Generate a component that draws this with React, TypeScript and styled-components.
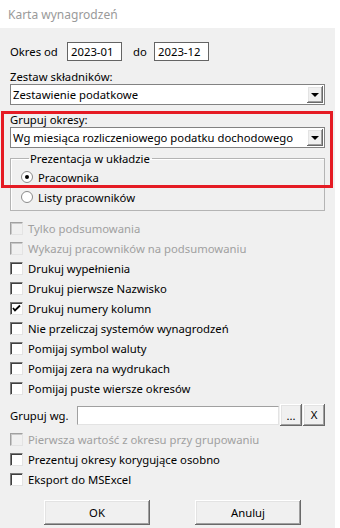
import React, { useState } from 'react';
import styled, { createGlobalStyle, css } from 'styled-components';

const GlobalStyle = createGlobalStyle`
    html, body {
        margin: 0;
        padding: 0;
        background: #ffffff;
    }
    body {
        font-family: 'Noto Sans', 'Open Sans', sans-serif;
        font-size: 11.3px;
        color: #000000;
    }
`;

const raised = css`
    background: #f0f0f0;
    box-shadow: inset -1px -1px #696969, inset 1px 1px #ffffff, inset -2px -2px #a0a0a0, inset 2px 2px #e3e3e3;
`;

const Window = styled.div`
    width: 340px;
    height: 528px;
    display: flex;
    flex-direction: column;
    background: #ffffff;
    overflow: hidden;
`;

const TitleBar = styled.div`
    height: 28px;
    flex: 0 0 28px;
    display: flex;
    align-items: center;
    padding-left: 8px;
    color: #9a9a9a;
    font-size: 12px;
`;

const Body = styled.div`
    position: relative;
    width: 335px;
    flex: 1;
    background: #f0f0f0;
    padding-left: 10px;
    box-sizing: border-box;
    display: flex;
    flex-direction: column;
`;

const PeriodRow = styled.div`
    margin-top: 13px;
    height: 20px;
    display: flex;
    align-items: center;
`;

const InlineLabel = styled.span<{ $width?: number; $left?: number }>`
    width: ${(p) => (p.$width ? `${p.$width}px` : 'auto')};
    margin-left: ${(p) => p.$left ?? 0}px;
    flex: 0 0 auto;
    white-space: nowrap;
`;

const TextBox = styled.div<{ $width: number }>`
    width: ${(p) => p.$width}px;
    height: 19px;
    box-sizing: border-box;
    border: 1px solid #646464;
    background: #ffffff;
    padding-left: 3px;
    line-height: 17px;
    white-space: nowrap;
`;

const FieldLabel = styled.div<{ $top: number }>`
    margin-top: ${(p) => p.$top}px;
    height: 15px;
    line-height: 15px;
    white-space: nowrap;
`;

const Combo = styled.div`
    width: 315px;
    height: 21px;
    box-sizing: border-box;
    border: 1px solid #828282;
    background: #ffffff;
    display: flex;
    align-items: center;
    justify-content: space-between;
    padding: 0 1px 0 2px;
`;

const ComboText = styled.span`
    white-space: nowrap;
    overflow: hidden;
`;

const DropButton = styled.div`
    ${raised};
    width: 16px;
    height: 17px;
    flex: 0 0 16px;
    display: flex;
    align-items: center;
    justify-content: center;
`;

const Triangle = styled.span`
    width: 0;
    height: 0;
    border-left: 4px solid transparent;
    border-right: 4px solid transparent;
    border-top: 4px solid #000000;
    margin-top: 1px;
`;

const GroupBox = styled.fieldset`
    margin: 3px 0 0 0;
    width: 315px;
    box-sizing: border-box;
    border: 1px solid #b4b4b4;
    box-shadow: inset 1px 1px #ffffff;
    padding: 1px 0 3px 10px;
    min-width: 0;

    legend {
        margin-left: 8px;
        padding: 0 2px 0 1px;
        height: 15px;
        line-height: 15px;
    }
`;

const OptionRow = styled.label<{ $disabled?: boolean }>`
    height: 20px;
    display: flex;
    align-items: center;
    white-space: nowrap;
    color: ${(p) => (p.$disabled ? '#a0a0a0' : '#000000')};
`;

const RadioCircle = styled.span<{ $checked: boolean }>`
    width: 12px;
    height: 12px;
    box-sizing: border-box;
    border-radius: 50%;
    border: 1px solid #8a8a8a;
    background: #ffffff;
    margin-right: 5px;
    display: flex;
    align-items: center;
    justify-content: center;

    &::after {
        content: '';
        width: 4px;
        height: 4px;
        border-radius: 50%;
        background: ${(p) => (p.$checked ? '#000000' : 'transparent')};
    }
`;

const CheckSquare = styled.span<{ $disabled?: boolean }>`
    width: 13px;
    height: 13px;
    box-sizing: border-box;
    flex: 0 0 13px;
    margin-right: 5px;
    background: ${(p) => (p.$disabled ? '#f0f0f0' : '#ffffff')};
    border-top: 1px solid ${(p) => (p.$disabled ? '#a0a0a0' : '#7a7a7a')};
    border-left: 1px solid ${(p) => (p.$disabled ? '#a0a0a0' : '#7a7a7a')};
    border-right: 1px solid #e3e3e3;
    border-bottom: 1px solid #e3e3e3;
    box-shadow: inset 1px 1px ${(p) => (p.$disabled ? '#c8c8c8' : '#404040')};
    display: flex;
    align-items: center;
    justify-content: center;
`;

const CheckList = styled.div<{ $top: number }>`
    margin-top: ${(p) => p.$top}px;
    display: flex;
    flex-direction: column;
`;

const GroupByRow = styled.div`
    margin-top: 6px;
    height: 22px;
    display: flex;
    align-items: center;
`;

const SunkenInput = styled.div`
    width: 202px;
    height: 19px;
    box-sizing: border-box;
    background: #ffffff;
    border-top: 1px solid #a0a0a0;
    border-left: 1px solid #a0a0a0;
    border-right: 1px solid #e3e3e3;
    border-bottom: 1px solid #e3e3e3;
`;

const SmallButton = styled.div<{ $dots?: boolean }>`
    ${raised};
    width: 22px;
    height: 22px;
    box-sizing: border-box;
    margin-left: 1px;
    display: flex;
    justify-content: center;
    align-items: ${(p) => (p.$dots ? 'flex-end' : 'center')};
    padding-bottom: ${(p) => (p.$dots ? '4px' : '0')};
    line-height: 12px;
`;

const ButtonRow = styled.div`
    margin-top: 11px;
    padding-left: 34px;
    display: flex;
    gap: 45px;
`;

const DialogButton = styled.div`
    ${raised};
    width: 106px;
    height: 25px;
    display: flex;
    align-items: center;
    justify-content: center;
`;

const Highlight = styled.div`
    position: absolute;
    left: 1px;
    top: 83px;
    width: 332px;
    height: 77px;
    box-sizing: border-box;
    border: 3px solid #e51b24;
    pointer-events: none;
`;

type CheckItem = { label: string; checked?: boolean; disabled?: boolean };

const topChecks: CheckItem[] = [
    { label: 'Tylko podsumowania', disabled: true },
    { label: 'Wykazuj pracowników na podsumowaniu', disabled: true },
    { label: 'Drukuj wypełnienia' },
    { label: 'Drukuj pierwsze Nazwisko' },
    { label: 'Drukuj numery kolumn', checked: true },
    { label: 'Nie przeliczaj systemów wynagrodzeń' },
    { label: 'Pomijaj symbol waluty' },
    { label: 'Pomijaj zera na wydrukach' },
    { label: 'Pomijaj puste wiersze okresów' },
];

const bottomChecks: CheckItem[] = [
    { label: 'Pierwsza wartość z okresu przy grupowaniu', disabled: true },
    { label: 'Prezentuj okresy korygujące osobno' },
    { label: 'Eksport do MSExcel' },
];

const CheckMark: React.FC = () => (
    <svg width="9" height="9" viewBox="0 0 9 9">
        <path d="M1 4 L3 6.5 L8 1.5" fill="none" stroke="#000" strokeWidth="1.8" />
    </svg>
);

const CheckOption: React.FC<{ item: CheckItem }> = ({ item }) => (
    <OptionRow $disabled={item.disabled}>
        <CheckSquare $disabled={item.disabled}>{item.checked && <CheckMark />}</CheckSquare>
        {item.label}
    </OptionRow>
);

const App: React.FC = () => {
    const [layout, setLayout] = useState<'employee' | 'list'>('employee');

    return (
        <Window>
            <GlobalStyle />
            <TitleBar>Karta wynagrodzeń</TitleBar>
            <Body>
                <PeriodRow>
                    <InlineLabel $width={57}>Okres od</InlineLabel>
                    <TextBox $width={55}>2023-01</TextBox>
                    <InlineLabel $width={21} $left={11}>do</InlineLabel>
                    <TextBox $width={55}>2023-12</TextBox>
                </PeriodRow>

                <FieldLabel $top={8}>Zestaw składników:</FieldLabel>
                <Combo>
                    <ComboText>Zestawienie podatkowe</ComboText>
                    <DropButton>
                        <Triangle />
                    </DropButton>
                </Combo>

                <FieldLabel $top={7}>Grupuj okresy:</FieldLabel>
                <Combo>
                    <ComboText>Wg miesiąca rozliczeniowego podatku dochodowego</ComboText>
                    <DropButton>
                        <Triangle />
                    </DropButton>
                </Combo>

                <GroupBox>
                    <legend>Prezentacja w układzie</legend>
                    <OptionRow onClick={() => setLayout('employee')}>
                        <RadioCircle $checked={layout === 'employee'} />
                        Pracownika
                    </OptionRow>
                    <OptionRow onClick={() => setLayout('list')}>
                        <RadioCircle $checked={layout === 'list'} />
                        Listy pracowników
                    </OptionRow>
                </GroupBox>

                <CheckList $top={7}>
                    {topChecks.map((item) => (
                        <CheckOption key={item.label} item={item} />
                    ))}
                </CheckList>

                <GroupByRow>
                    <InlineLabel $width={67}>Grupuj wg.</InlineLabel>
                    <SunkenInput />
                    <SmallButton $dots>...</SmallButton>
                    <SmallButton>X</SmallButton>
                </GroupByRow>

                <CheckList $top={3}>
                    {bottomChecks.map((item) => (
                        <CheckOption key={item.label} item={item} />
                    ))}
                </CheckList>

                <ButtonRow>
                    <DialogButton>OK</DialogButton>
                    <DialogButton>Anuluj</DialogButton>
                </ButtonRow>

                <Highlight />
            </Body>
        </Window>
    );
};

export default App;
